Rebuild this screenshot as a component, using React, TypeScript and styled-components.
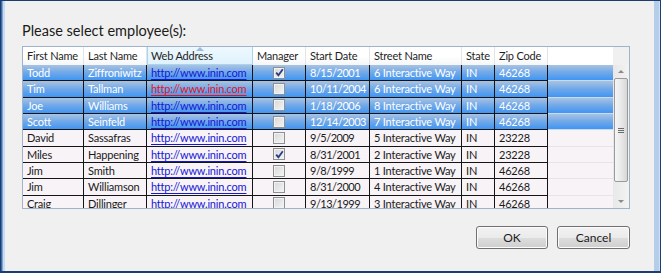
import React from 'react';
import styled, { createGlobalStyle, css } from 'styled-components';

const GlobalStyle = createGlobalStyle`
    html, body {
        margin: 0;
        padding: 0;
        background: #f0f0f0;
    }
    * {
        box-sizing: border-box;
    }
`;

const UI_FONT = `Lato, "Noto Sans", "Liberation Sans", sans-serif`;

type Employee = {
    first: string;
    last: string;
    manager: boolean;
    start: string;
    street: string;
    state: string;
    zip: string;
    selected?: boolean;
    visited?: boolean;
};

const EMPLOYEES: Employee[] = [
    { first: 'Todd', last: 'Ziffroniwitz', manager: true, start: '8/15/2001', street: '6 Interactive Way', state: 'IN', zip: '46268', selected: true },
    { first: 'Tim', last: 'Tallman', manager: false, start: '10/11/2004', street: '6 Interactive Way', state: 'IN', zip: '46268', selected: true, visited: true },
    { first: 'Joe', last: 'Williams', manager: false, start: '1/18/2006', street: '8 Interactive Way', state: 'IN', zip: '46268', selected: true },
    { first: 'Scott', last: 'Seinfeld', manager: false, start: '12/14/2003', street: '7 Interactive Way', state: 'IN', zip: '46268', selected: true },
    { first: 'David', last: 'Sassafras', manager: false, start: '9/5/2009', street: '5 Interactive Way', state: 'IN', zip: '23228' },
    { first: 'Miles', last: 'Happening', manager: true, start: '8/31/2001', street: '2 Interactive Way', state: 'IN', zip: '23228' },
    { first: 'Jim', last: 'Smith', manager: false, start: '9/8/1999', street: '1 Interactive Way', state: 'IN', zip: '46268' },
    { first: 'Jim', last: 'Williamson', manager: false, start: '8/31/2000', street: '4 Interactive Way', state: 'IN', zip: '46268' },
    { first: 'Craig', last: 'Dillinger', manager: false, start: '9/13/1999', street: '3 Interactive Way', state: 'IN', zip: '46268' },
];

const COLUMNS = [
    { key: 'first', label: 'First Name', width: 61 },
    { key: 'last', label: 'Last Name', width: 63 },
    { key: 'web', label: 'Web Address', width: 106 },
    { key: 'manager', label: 'Manager', width: 53 },
    { key: 'start', label: 'Start Date', width: 64 },
    { key: 'street', label: 'Street Name', width: 92 },
    { key: 'state', label: 'State', width: 33 },
    { key: 'zip', label: 'Zip Code', width: 53 },
];

const Window = styled.div`
    width: 661px;
    height: 273px;
    border: 1px solid #1c3d70;
    border-bottom-width: 2px;
    background: #f0f0f0;
    box-shadow: inset 1px 0 0 #3d6aa6, inset 2px 0 0 #7fa6d3, inset 4px 0 0 #c8dbf0,
        inset -1px 0 0 #cfe0f3, inset -6px 0 0 #b5cde8;
    padding: 21px 30px 0 21px;
    display: flex;
    flex-direction: column;
    font-family: ${UI_FONT};
    color: #1e1e1e;
`;

const Title = styled.div`
    font-size: 14.5px;
    line-height: 18px;
    height: 18px;
    margin-bottom: 6px;
    color: #1b1b1b;
`;

const Grid = styled.div`
    width: 608px;
    height: 163px;
    border: 1px solid #9fb3cb;
    background: #f7f3f6;
    display: flex;
    flex-direction: column;
    overflow: hidden;
    font-size: 11px;
    letter-spacing: -0.2px;
`;

const HeaderRow = styled.div`
    display: flex;
    height: 18px;
    flex-shrink: 0;
    background: linear-gradient(#ffffff, #ffffff 50%, #f5f6f7);
`;

const HeaderCell = styled.div<{ $w: number; $active?: boolean }>`
    position: relative;
    width: ${(p) => p.$w}px;
    flex-shrink: 0;
    padding: 0 0 0 4px;
    line-height: 18px;
    white-space: nowrap;
    overflow: hidden;
    text-overflow: clip;
    color: #1f1f1f;
    border-right: 1px solid #e3e4e6;
    ${(p) =>
        p.$active &&
        css`
            background: linear-gradient(#eef8fe, #dff2fc);
            border: 1px solid #a9d4ef;
            border-top: none;
            line-height: 17px;
            padding-left: 3px;
        `}
`;

const SortArrow = styled.span`
    position: absolute;
    top: 0;
    left: 50%;
    margin-left: -4px;
    width: 0;
    height: 0;
    border-left: 4px solid transparent;
    border-right: 4px solid transparent;
    border-bottom: 4px solid #9bbcdb;
`;

const HeaderFiller = styled.div`
    flex: 1;
    background: #ffffff;
`;

const HeaderCorner = styled.div`
    width: 16px;
    flex-shrink: 0;
    background: #f0f0f0;
`;

const Body = styled.div`
    flex: 1;
    display: flex;
    overflow: hidden;
`;

const Rows = styled.div`
    flex: 1;
    overflow: hidden;
`;

const Row = styled.div<{ $selected?: boolean }>`
    display: flex;
    height: 16.33px;
    color: ${(p) => (p.$selected ? '#ffffff' : '#1a1a1a')};
    background: ${(p) =>
        p.$selected ? 'linear-gradient(#a9c3e2, #72a9e8 45%, #3a93f5)' : '#f7f3f6'};
`;

const Cell = styled.div<{ $w: number; $center?: boolean; $tight?: boolean }>`
    width: ${(p) => p.$w}px;
    flex-shrink: 0;
    padding: 0 0 0 ${(p) => (p.$center ? 0 : 4)}px;
    line-height: 15px;
    white-space: nowrap;
    overflow: hidden;
    text-overflow: clip;
    letter-spacing: ${(p) => (p.$tight ? '-0.5px' : 'inherit')};
    border-right: 1px solid #141414;
    border-bottom: 1px solid #141414;
    display: flex;
    align-items: center;
    justify-content: ${(p) => (p.$center ? 'center' : 'flex-start')};
`;

const RowFiller = styled.div<{ $selected?: boolean }>`
    flex: 1;
    border-bottom: 1px solid ${(p) => (p.$selected ? '#c7dcf3' : '#e8e3e6')};
`;

const Link = styled.span<{ $visited?: boolean }>`
    color: ${(p) => (p.$visited ? '#e8121b' : '#1616d6')};
    text-decoration: underline;
    text-underline-offset: 2px;
`;

const CheckBox = styled.span`
    display: inline-flex;
    align-items: center;
    justify-content: center;
    width: 12px;
    height: 12px;
    border: 1px solid #8f8f8f;
    background: linear-gradient(135deg, #d8d8d8, #f4f4f4);
    box-shadow: inset 0 0 0 1px #f2f2f2;
`;

const ScrollBar = styled.div`
    width: 16px;
    flex-shrink: 0;
    display: flex;
    flex-direction: column;
    align-items: center;
    background: linear-gradient(90deg, #e8e8e8, #f2f2f2);
`;

const ScrollArrow = styled.div<{ $down?: boolean }>`
    height: 13px;
    width: 100%;
    display: flex;
    align-items: center;
    justify-content: center;
    &::after {
        content: '';
        border-left: 3px solid transparent;
        border-right: 3px solid transparent;
        ${(p) =>
            p.$down ? 'border-top: 3px solid #8a8a8a;' : 'border-bottom: 3px solid #8a8a8a;'}
    }
`;

const Thumb = styled.div`
    width: 14px;
    height: 104px;
    border: 1px solid #9a9a9a;
    border-radius: 2px;
    background: linear-gradient(90deg, #f6f6f6, #e6e6e6 60%, #d6d6d6);
    display: flex;
    flex-direction: column;
    align-items: center;
    justify-content: center;
    gap: 1px;
`;

const Grip = styled.span`
    width: 6px;
    height: 1px;
    background: #6b6b6b;
`;

const ScrollTrack = styled.div`
    flex: 1;
`;

const Buttons = styled.div`
    display: flex;
    justify-content: flex-end;
    gap: 9px;
    margin-top: 17px;
    width: 608px;
`;

const Button = styled.button<{ $w: number }>`
    width: ${(p) => p.$w}px;
    height: 23px;
    border: 1px solid #707070;
    border-radius: 3px;
    background: linear-gradient(#f2f2f2, #ebebeb 50%, #dddddd 51%, #cfcfcf);
    box-shadow: inset 0 0 0 1px #fcfcfc;
    font-family: ${UI_FONT};
    font-size: 12px;
    color: #1b1b1b;
    padding: 0;
`;

const Check = () => (
    <svg width="9" height="9" viewBox="0 0 9 9">
        <path d="M1.2 4.6 L3.4 7.2 L7.8 1.2" fill="none" stroke="#263d84" strokeWidth="1.8" />
    </svg>
);

export default function App() {
    const w = (i: number) => COLUMNS[i].width;
    return (
        <>
            <GlobalStyle />
            <Window>
                <Title>Please select employee(s):</Title>
                <Grid>
                    <HeaderRow>
                        {COLUMNS.map((c) => (
                            <HeaderCell key={c.key} $w={c.width} $active={c.key === 'web'}>
                                {c.key === 'web' && <SortArrow />}
                                {c.label}
                            </HeaderCell>
                        ))}
                        <HeaderFiller />
                        <HeaderCorner />
                    </HeaderRow>
                    <Body>
                        <Rows>
                            {EMPLOYEES.map((e, i) => (
                                <Row key={i} $selected={e.selected}>
                                    <Cell $w={w(0)}>{e.first}</Cell>
                                    <Cell $w={w(1)}>{e.last}</Cell>
                                    <Cell $w={w(2)}>
                                        <Link $visited={e.visited}>http://www.inin.com</Link>
                                    </Cell>
                                    <Cell $w={w(3)} $center>
                                        <CheckBox>{e.manager && <Check />}</CheckBox>
                                    </Cell>
                                    <Cell $w={w(4)} $tight>{e.start}</Cell>
                                    <Cell $w={w(5)}>{e.street}</Cell>
                                    <Cell $w={w(6)}>{e.state}</Cell>
                                    <Cell $w={w(7)}>{e.zip}</Cell>
                                    <RowFiller $selected={e.selected} />
                                </Row>
                            ))}
                        </Rows>
                        <ScrollBar>
                            <ScrollArrow />
                            <Thumb>
                                <Grip />
                                <Grip />
                                <Grip />
                            </Thumb>
                            <ScrollTrack />
                            <ScrollArrow $down />
                        </ScrollBar>
                    </Body>
                </Grid>
                <Buttons>
                    <Button $w={72}>OK</Button>
                    <Button $w={73}>Cancel</Button>
                </Buttons>
            </Window>
        </>
    );
}
